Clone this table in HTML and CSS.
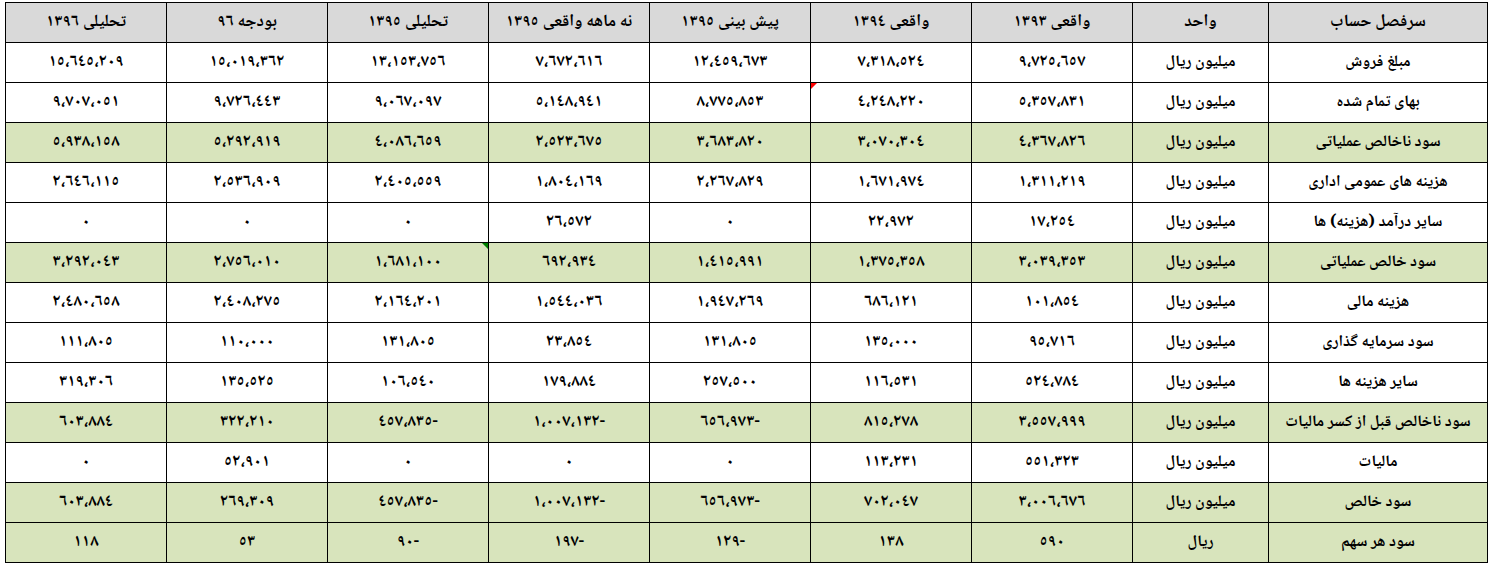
FILE: index.html
```html
<!DOCTYPE html>
<html lang="fa" dir="rtl">
<head>
<meta charset="utf-8">
<link rel="stylesheet" href="styles.css">
<title>جدول</title>
</head>
<body>
<div class="wrap">
<table class="fin">
<colgroup>
<col class="c-label"><col class="c-unit"><col class="c-num"><col class="c-num"><col class="c-num"><col class="c-num"><col class="c-num"><col class="c-num"><col class="c-num">
</colgroup>
<thead>
<tr>
<th>سرفصل حساب</th><th>واحد</th><th>واقعی ١٣٩٣</th><th>واقعی ١٣٩٤</th><th>پیش بینی ١٣٩٥</th><th>نه ماهه واقعی ١٣٩٥</th><th>تحلیلی ١٣٩٥</th><th>بودجه ٩٦</th><th>تحلیلی ١٣٩٦</th>
</tr>
</thead>
<tbody>
<tr>
<td>مبلغ فروش</td><td>میلیون ریال</td><td class="n">٩،٧٢٥،٦٥٧</td><td class="n">٧،٣١٨،٥٢٤</td><td class="n">١٢،٤٥٩،٦٧٣</td><td class="n">٧،٦٧٢،٦١٦</td><td class="n">١٣،١٥٣،٧٥٦</td><td class="n">١٥،٠١٩،٣٦٢</td><td class="n">١٥،٦٤٥،٢٠٩</td>
</tr>
<tr>
<td>بهای تمام شده</td><td>میلیون ریال</td><td class="n">٥،٣٥٧،٨٣١</td><td class="n flag-red">٤،٢٤٨،٢٢٠</td><td class="n">٨،٧٧٥،٨٥٣</td><td class="n">٥،١٤٨،٩٤١</td><td class="n">٩،٠٦٧،٠٩٧</td><td class="n">٩،٧٢٦،٤٤٣</td><td class="n">٩،٧٠٧،٠٥١</td>
</tr>
<tr class="green">
<td>سود ناخالص عملیاتی</td><td>میلیون ریال</td><td class="n">٤،٣٦٧،٨٢٦</td><td class="n">٣،٠٧٠،٣٠٤</td><td class="n">٣،٦٨٣،٨٢٠</td><td class="n">٢،٥٢٣،٦٧٥</td><td class="n">٤،٠٨٦،٦٥٩</td><td class="n">٥،٢٩٢،٩١٩</td><td class="n">٥،٩٣٨،١٥٨</td>
</tr>
<tr>
<td>هزینه های عمومی اداری</td><td>میلیون ریال</td><td class="n">١،٣١١،٢١٩</td><td class="n">١،٦٧١،٩٧٤</td><td class="n">٢،٢٦٧،٨٢٩</td><td class="n">١،٨٠٤،١٦٩</td><td class="n">٢،٤٠٥،٥٥٩</td><td class="n">٢،٥٣٦،٩٠٩</td><td class="n">٢،٦٤٦،١١٥</td>
</tr>
<tr>
<td>سایر درآمد (هزینه) ها</td><td>میلیون ریال</td><td class="n">١٧،٢٥٤</td><td class="n">٢٢،٩٧٢</td><td class="n">٠</td><td class="n">٢٦،٥٧٢</td><td class="n">٠</td><td class="n">٠</td><td class="n">٠</td>
</tr>
<tr class="green">
<td>سود خالص عملیاتی</td><td>میلیون ریال</td><td class="n">٣،٠٣٩،٣٥٣</td><td class="n">١،٣٧٥،٣٥٨</td><td class="n">١،٤١٥،٩٩١</td><td class="n">٦٩٢،٩٣٤</td><td class="n flag-green">١،٦٨١،١٠٠</td><td class="n">٢،٧٥٦،٠١٠</td><td class="n">٣،٢٩٢،٠٤٣</td>
</tr>
<tr>
<td>هزینه مالی</td><td>میلیون ریال</td><td class="n">١٠١،٨٥٤</td><td class="n">٦٨٦،١٢١</td><td class="n">١،٩٤٧،٢٦٩</td><td class="n">١،٥٤٤،٠٣٦</td><td class="n">٢،١٦٤،٢٠١</td><td class="n">٢،٤٠٨،٢٧٥</td><td class="n">٢،٤٨٠،٦٥٨</td>
</tr>
<tr>
<td>سود سرمایه گذاری</td><td>میلیون ریال</td><td class="n">٩٥،٧١٦</td><td class="n">١٣٥،٠٠٠</td><td class="n">١٣١،٨٠٥</td><td class="n">٢٣،٨٥٤</td><td class="n">١٣١،٨٠٥</td><td class="n">١١٠،٠٠٠</td><td class="n">١١١،٨٠٥</td>
</tr>
<tr>
<td>سایر هزینه ها</td><td>میلیون ریال</td><td class="n">٥٢٤،٧٨٤</td><td class="n">١١٦،٥٣١</td><td class="n">٢٥٧،٥٠٠</td><td class="n">١٧٩،٨٨٤</td><td class="n">١٠٦،٥٤٠</td><td class="n">١٣٥،٥٢٥</td><td class="n">٣١٩،٣٠٦</td>
</tr>
<tr class="green">
<td>سود ناخالص قبل از کسر مالیات</td><td>میلیون ریال</td><td class="n">٣،٥٥٧،٩٩٩</td><td class="n">٨١٥،٢٧٨</td><td class="n">٦٥٦،٩٧٣-</td><td class="n">١،٠٠٧،١٣٢-</td><td class="n">٤٥٧،٨٣٥-</td><td class="n">٣٢٢،٢١٠</td><td class="n">٦٠٣،٨٨٤</td>
</tr>
<tr>
<td>مالیات</td><td>میلیون ریال</td><td class="n">٥٥١،٣٢٣</td><td class="n">١١٣،٢٣١</td><td class="n">٠</td><td class="n">٠</td><td class="n">٠</td><td class="n">٥٢،٩٠١</td><td class="n">٠</td>
</tr>
<tr class="green">
<td>سود خالص</td><td>میلیون ریال</td><td class="n">٣،٠٠٦،٦٧٦</td><td class="n">٧٠٢،٠٤٧</td><td class="n">٦٥٦،٩٧٣-</td><td class="n">١،٠٠٧،١٣٢-</td><td class="n">٤٥٧،٨٣٥-</td><td class="n">٢٦٩،٣٠٩</td><td class="n">٦٠٣،٨٨٤</td>
</tr>
<tr class="green">
<td>سود هر سهم</td><td>ریال</td><td class="n">٥٩٠</td><td class="n">١٣٨</td><td class="n">١٢٩-</td><td class="n">١٩٧-</td><td class="n">٩٠-</td><td class="n">٥٣</td><td class="n">١١٨</td>
</tr>
</tbody>
</table>
</div>
</body>
</html>
```

FILE: styles.css
```css
html, body {
  margin: 0;
  padding: 0;
  background: #ffffff;
}

.wrap {
  padding: 2px 6px 0 6px;
}

.fin {
  border-collapse: collapse;
  table-layout: fixed;
  width: 1483px;
  font-family: "Noto Naskh Arabic", "Noto Sans Arabic", "DejaVu Sans", sans-serif;
  font-size: 16px;
  font-weight: bold;
  color: #000;
}

.c-label { width: 219px; }
.c-unit { width: 136px; }
.c-num { width: 161px; }

.fin th,
.fin td {
  border: 1px solid #000;
  height: 40px;
  padding: 0 4px;
  text-align: center;
  vertical-align: middle;
  white-space: nowrap;
  box-sizing: border-box;
  line-height: 1;
}

.fin th {
  background: #d9d9d9;
  font-weight: bold;
  font-size: 17px;
}

.fin tr.green td {
  background: #d8e4bc;
}

.fin td.n {
  direction: ltr;
  unicode-bidi: bidi-override;
  font-size: 17px;
  letter-spacing: 0.4px;
}

.fin td.flag-red,
.fin td.flag-green {
  position: relative;
}

.fin td.flag-red::before {
  content: "";
  position: absolute;
  left: 0;
  top: 0;
  border-top: 6px solid #ff0000;
  border-right: 6px solid transparent;
}

.fin td.flag-green::after {
  content: "";
  position: absolute;
  right: 0;
  top: 0;
  border-top: 6px solid #008000;
  border-left: 6px solid transparent;
}
```
